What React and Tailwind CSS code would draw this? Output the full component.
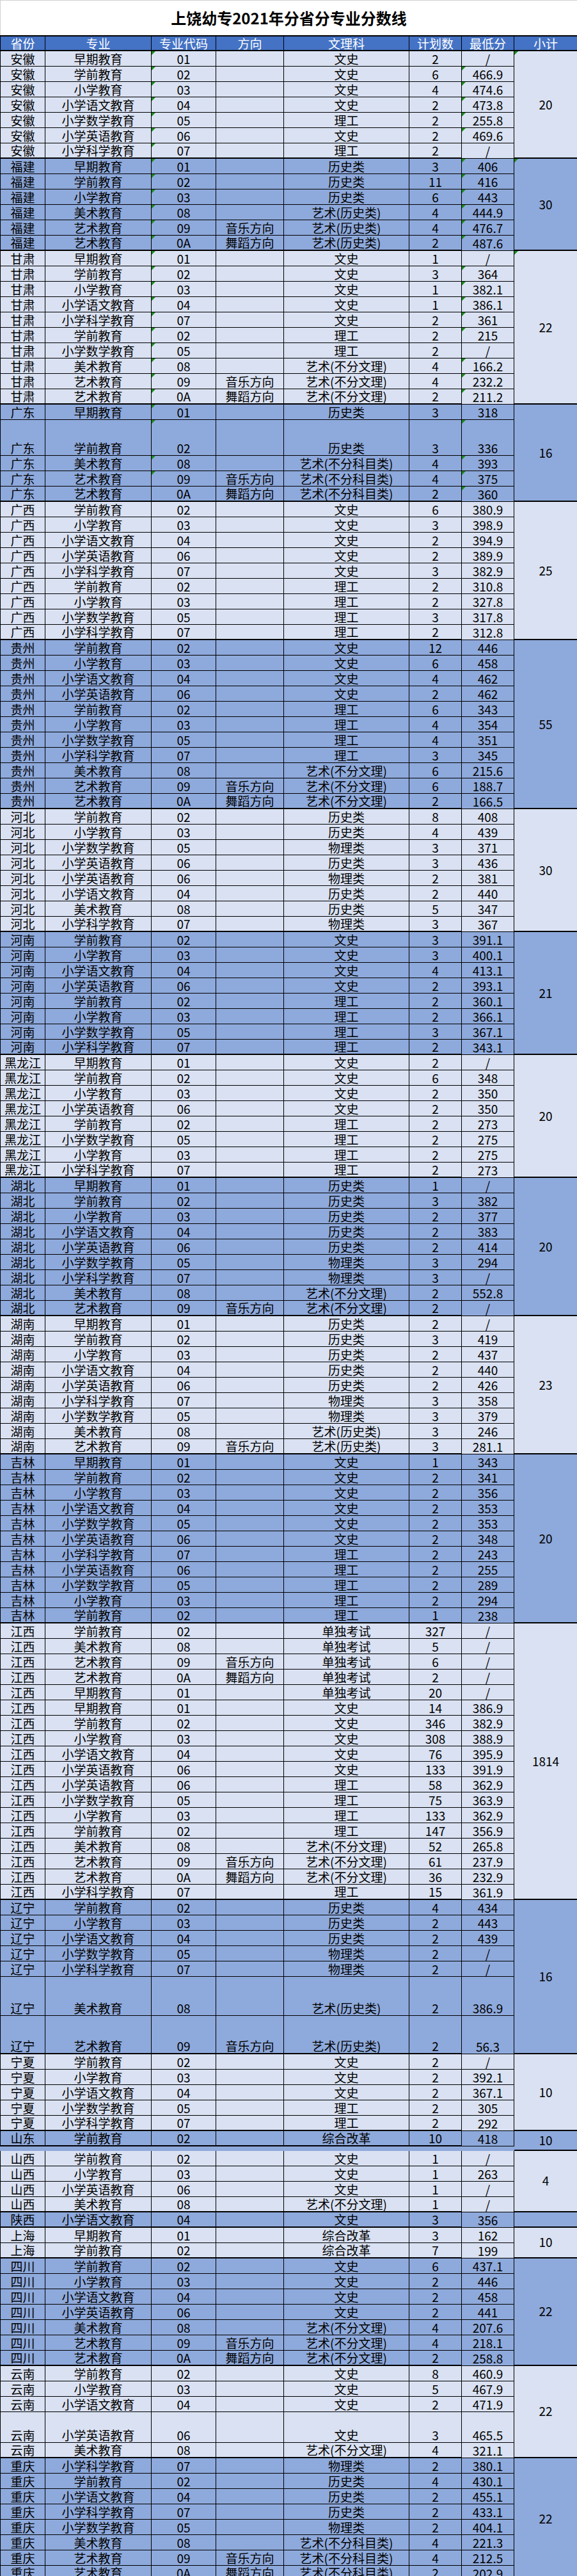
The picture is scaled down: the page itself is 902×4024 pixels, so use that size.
const groups = [
  { p: "安徽", total: "20", tri: true, rows: [
    ["早期教育", "01", "", "文史", "2", "/", "c"],
    ["学前教育", "02", "", "文史", "6", "466.9", "cs"],
    ["小学教育", "03", "", "文史", "4", "474.6", "cs"],
    ["小学语文教育", "04", "", "文史", "2", "473.8", "cs"],
    ["小学数学教育", "05", "", "理工", "2", "255.8", "cs"],
    ["小学英语教育", "06", "", "文史", "2", "469.6", "cs"],
    ["小学科学教育", "07", "", "理工", "2", "/", "c"],
  ]},
  { p: "福建", total: "30", tri: true, rows: [
    ["早期教育", "01", "", "历史类", "3", "406", "cs"],
    ["学前教育", "02", "", "历史类", "11", "416", "cs"],
    ["小学教育", "03", "", "历史类", "6", "443", "cs"],
    ["美术教育", "08", "", "艺术(历史类)", "4", "444.9", "cs"],
    ["艺术教育", "09", "音乐方向", "艺术(历史类)", "4", "476.7", "cs"],
    ["艺术教育", "0A", "舞蹈方向", "艺术(历史类)", "2", "487.6", "cs"],
  ]},
  { p: "甘肃", total: "22", tri: true, rows: [
    ["早期教育", "01", "", "文史", "1", "/", "c"],
    ["学前教育", "02", "", "文史", "3", "364", "cs"],
    ["小学教育", "03", "", "文史", "1", "382.1", "cs"],
    ["小学语文教育", "04", "", "文史", "1", "386.1", "cs"],
    ["小学科学教育", "07", "", "文史", "2", "361", "cs"],
    ["学前教育", "02", "", "理工", "2", "215", "cs"],
    ["小学数学教育", "05", "", "理工", "2", "/", "c"],
    ["美术教育", "08", "", "艺术(不分文理)", "4", "166.2", "cs"],
    ["艺术教育", "09", "音乐方向", "艺术(不分文理)", "4", "232.2", "cs"],
    ["艺术教育", "0A", "舞蹈方向", "艺术(不分文理)", "2", "211.2", "cs"],
  ]},
  { p: "广东", total: "16", rows: [
    ["早期教育", "01", "", "历史类", "3", "318", "c"],
    ["学前教育", "02", "", "历史类", "3", "336", "cs", 56],
    ["美术教育", "08", "", "艺术(不分科目类)", "4", "393", "cs"],
    ["艺术教育", "09", "音乐方向", "艺术(不分科目类)", "4", "375", "cs"],
    ["艺术教育", "0A", "舞蹈方向", "艺术(不分科目类)", "2", "360", "s"],
  ]},
  { p: "广西", total: "25", rows: [
    ["学前教育", "02", "", "文史", "6", "380.9"],
    ["小学教育", "03", "", "文史", "3", "398.9"],
    ["小学语文教育", "04", "", "文史", "2", "394.9"],
    ["小学英语教育", "06", "", "文史", "2", "389.9"],
    ["小学科学教育", "07", "", "文史", "3", "382.9"],
    ["学前教育", "02", "", "理工", "2", "310.8"],
    ["小学教育", "03", "", "理工", "2", "327.8"],
    ["小学数学教育", "05", "", "理工", "3", "317.8"],
    ["小学科学教育", "07", "", "理工", "2", "312.8"],
  ]},
  { p: "贵州", total: "55", rows: [
    ["学前教育", "02", "", "文史", "12", "446"],
    ["小学教育", "03", "", "文史", "6", "458"],
    ["小学语文教育", "04", "", "文史", "4", "462"],
    ["小学英语教育", "06", "", "文史", "2", "462"],
    ["学前教育", "02", "", "理工", "6", "343"],
    ["小学教育", "03", "", "理工", "4", "354"],
    ["小学数学教育", "05", "", "理工", "4", "351"],
    ["小学科学教育", "07", "", "理工", "3", "345"],
    ["美术教育", "08", "", "艺术(不分文理)", "6", "215.6"],
    ["艺术教育", "09", "音乐方向", "艺术(不分文理)", "6", "188.7"],
    ["艺术教育", "0A", "舞蹈方向", "艺术(不分文理)", "2", "166.5"],
  ]},
  { p: "河北", total: "30", rows: [
    ["学前教育", "02", "", "历史类", "8", "408"],
    ["小学教育", "03", "", "历史类", "4", "439"],
    ["小学数学教育", "05", "", "物理类", "3", "371"],
    ["小学英语教育", "06", "", "历史类", "3", "436"],
    ["小学英语教育", "06", "", "物理类", "2", "381"],
    ["小学语文教育", "04", "", "历史类", "2", "440"],
    ["美术教育", "08", "", "历史类", "5", "347"],
    ["小学科学教育", "07", "", "物理类", "3", "367"],
  ]},
  { p: "河南", total: "21", rows: [
    ["学前教育", "02", "", "文史", "3", "391.1"],
    ["小学教育", "03", "", "文史", "3", "400.1"],
    ["小学语文教育", "04", "", "文史", "4", "413.1"],
    ["小学英语教育", "06", "", "文史", "2", "393.1"],
    ["学前教育", "02", "", "理工", "2", "360.1"],
    ["小学教育", "03", "", "理工", "2", "366.1"],
    ["小学数学教育", "05", "", "理工", "3", "367.1"],
    ["小学科学教育", "07", "", "理工", "2", "343.1"],
  ]},
  { p: "黑龙江", total: "20", rows: [
    ["早期教育", "01", "", "文史", "2", "/"],
    ["学前教育", "02", "", "文史", "6", "348"],
    ["小学教育", "03", "", "文史", "2", "350"],
    ["小学英语教育", "06", "", "文史", "2", "350"],
    ["学前教育", "02", "", "理工", "2", "273"],
    ["小学数学教育", "05", "", "理工", "2", "275"],
    ["小学教育", "03", "", "理工", "2", "275"],
    ["小学科学教育", "07", "", "理工", "2", "273"],
  ]},
  { p: "湖北", total: "20", rows: [
    ["早期教育", "01", "", "历史类", "1", "/"],
    ["学前教育", "02", "", "历史类", "3", "382"],
    ["小学教育", "03", "", "历史类", "2", "377"],
    ["小学语文教育", "04", "", "历史类", "2", "383"],
    ["小学英语教育", "06", "", "历史类", "2", "414"],
    ["小学数学教育", "05", "", "物理类", "3", "294"],
    ["小学科学教育", "07", "", "物理类", "3", "/"],
    ["美术教育", "08", "", "艺术(不分文理)", "2", "552.8"],
    ["艺术教育", "09", "音乐方向", "艺术(不分文理)", "2", "/"],
  ]},
  { p: "湖南", total: "23", rows: [
    ["早期教育", "01", "", "历史类", "2", "/"],
    ["学前教育", "02", "", "历史类", "3", "419"],
    ["小学教育", "03", "", "历史类", "2", "437"],
    ["小学语文教育", "04", "", "历史类", "2", "440"],
    ["小学英语教育", "06", "", "历史类", "2", "426"],
    ["小学科学教育", "07", "", "物理类", "3", "358"],
    ["小学数学教育", "05", "", "物理类", "3", "379"],
    ["美术教育", "08", "", "艺术(历史类)", "3", "246"],
    ["艺术教育", "09", "音乐方向", "艺术(历史类)", "3", "281.1"],
  ]},
  { p: "吉林", total: "20", rows: [
    ["早期教育", "01", "", "文史", "1", "343"],
    ["学前教育", "02", "", "文史", "2", "341"],
    ["小学教育", "03", "", "文史", "2", "356"],
    ["小学语文教育", "04", "", "文史", "2", "353"],
    ["小学数学教育", "05", "", "文史", "2", "353"],
    ["小学英语教育", "06", "", "文史", "2", "348"],
    ["小学科学教育", "07", "", "理工", "2", "243"],
    ["小学英语教育", "06", "", "理工", "2", "255"],
    ["小学数学教育", "05", "", "理工", "2", "289"],
    ["小学教育", "03", "", "理工", "2", "294"],
    ["学前教育", "02", "", "理工", "1", "238"],
  ]},
  { p: "江西", total: "1814", rows: [
    ["学前教育", "02", "", "单独考试", "327", "/"],
    ["美术教育", "08", "", "单独考试", "5", "/"],
    ["艺术教育", "09", "音乐方向", "单独考试", "6", "/"],
    ["艺术教育", "0A", "舞蹈方向", "单独考试", "2", "/"],
    ["早期教育", "01", "", "单独考试", "20", "/"],
    ["早期教育", "01", "", "文史", "14", "386.9"],
    ["学前教育", "02", "", "文史", "346", "382.9"],
    ["小学教育", "03", "", "文史", "308", "388.9"],
    ["小学语文教育", "04", "", "文史", "76", "395.9"],
    ["小学英语教育", "06", "", "文史", "133", "391.9"],
    ["小学英语教育", "06", "", "理工", "58", "362.9"],
    ["小学数学教育", "05", "", "理工", "75", "363.9"],
    ["小学教育", "03", "", "理工", "133", "362.9"],
    ["学前教育", "02", "", "理工", "147", "356.9"],
    ["美术教育", "08", "", "艺术(不分文理)", "52", "265.8"],
    ["艺术教育", "09", "音乐方向", "艺术(不分文理)", "61", "237.9"],
    ["艺术教育", "0A", "舞蹈方向", "艺术(不分文理)", "36", "232.9"],
    ["小学科学教育", "07", "", "理工", "15", "361.9"],
  ]},
  { p: "辽宁", total: "16", rows: [
    ["学前教育", "02", "", "历史类", "4", "434"],
    ["小学教育", "03", "", "历史类", "2", "443"],
    ["小学语文教育", "04", "", "历史类", "2", "439"],
    ["小学数学教育", "05", "", "物理类", "2", "/"],
    ["小学科学教育", "07", "", "物理类", "2", "/"],
    ["美术教育", "08", "", "艺术(历史类)", "2", "386.9", "", 61],
    ["艺术教育", "09", "音乐方向", "艺术(历史类)", "2", "56.3", "", 60],
  ]},
  { p: "宁夏", total: "10", rows: [
    ["学前教育", "02", "", "文史", "2", "/"],
    ["小学教育", "03", "", "文史", "2", "392.1"],
    ["小学语文教育", "04", "", "文史", "2", "367.1"],
    ["小学数学教育", "05", "", "理工", "2", "305"],
    ["小学科学教育", "07", "", "理工", "2", "292"],
  ]},
  { p: "山东", total: "10", rows: [
    ["学前教育", "02", "", "综合改革", "10", "418"],
  ]},
  { p: "山西", total: "4", rows: [
    ["学前教育", "02", "", "文史", "1", "/"],
    ["小学教育", "03", "", "文史", "1", "263"],
    ["小学英语教育", "06", "", "文史", "1", "/"],
    ["美术教育", "08", "", "艺术(不分文理)", "1", "/"],
  ]},
  { p: "陕西", total: "", rows: [
    ["小学语文教育", "04", "", "文史", "3", "356"],
  ]},
  { p: "上海", total: "10", rows: [
    ["早期教育", "01", "", "综合改革", "3", "162"],
    ["学前教育", "02", "", "综合改革", "7", "199"],
  ]},
  { p: "四川", total: "22", rows: [
    ["学前教育", "02", "", "文史", "6", "437.1"],
    ["小学教育", "03", "", "文史", "2", "446"],
    ["小学语文教育", "04", "", "文史", "2", "458"],
    ["小学英语教育", "06", "", "文史", "2", "441"],
    ["美术教育", "08", "", "艺术(不分文理)", "4", "207.6"],
    ["艺术教育", "09", "音乐方向", "艺术(不分文理)", "4", "218.1"],
    ["艺术教育", "0A", "舞蹈方向", "艺术(不分文理)", "2", "258.8"],
  ]},
  { p: "云南", total: "22", rows: [
    ["学前教育", "02", "", "文史", "8", "460.9"],
    ["小学教育", "03", "", "文史", "5", "467.9"],
    ["小学语文教育", "04", "", "文史", "2", "471.9"],
    ["小学英语教育", "06", "", "文史", "3", "465.5", "", 48],
    ["美术教育", "08", "", "艺术(不分文理)", "4", "321.1"],
  ]},
  { p: "重庆", total: "22", rows: [
    ["小学科学教育", "07", "", "物理类", "2", "380.1"],
    ["学前教育", "02", "", "历史类", "4", "430.1"],
    ["小学语文教育", "04", "", "历史类", "2", "455.1"],
    ["小学科学教育", "07", "", "历史类", "2", "433.1"],
    ["小学数学教育", "05", "", "物理类", "2", "404.1"],
    ["美术教育", "08", "", "艺术(不分科目类)", "4", "221.3"],
    ["艺术教育", "09", "音乐方向", "艺术(不分科目类)", "4", "212.5"],
    ["艺术教育", "0A", "舞蹈方向", "艺术(不分科目类)", "2", "202.9"],
  ]},
];

const COLS = ["w-[71px] border-l", "w-[166px]", "w-[101px]", "w-[106px]", "w-[196px]", "w-[82px]", "w-[82px]"];
const HEADS = ["省份", "专业", "专业代码", "方向", "文理科", "计划数", "最低分"];
const HEIGHTS = { 24: "h-[24px]", 48: "h-[48px]", 56: "h-[56px]", 60: "h-[60px]", 61: "h-[61px]" };

const Tri = () => (
  <span className="absolute left-0 top-0 h-0 w-0 border-t-[6px] border-r-[6px] border-t-[#1a8a1a] border-r-transparent" />
);

const Row = ({ prov, row, last }) => {
  const [major, code, dir, subj, plan, score, flags = "", h = 24] = row;
  const vals = [prov, major, code, dir, subj, plan, score];
  return (
    <div className={`flex ${HEIGHTS[h]}`}>
      {vals.map((v, i) => (
        <div
          key={i}
          className={`relative flex shrink-0 items-end justify-center border-r border-black leading-[23px] whitespace-nowrap ${COLS[i]} ${
            last && i !== 6 ? "border-b-2" : "border-b"
          }`}
        >
          {i === 2 && flags.includes("c") && <Tri />}
          {i === 6 && flags.includes("s") && <Tri />}
          {v}
        </div>
      ))}
    </div>
  );
};

export default function App() {
  return (
    <div className="w-[902px] bg-white text-black font-['Noto_Sans_CJK_SC','Liberation_Sans',sans-serif] text-[19px]">
      {/* TITLE */}
      <div className="flex h-[55px] items-center justify-center border-t border-l border-[#d0d0d0] text-[24px] font-bold">
        上饶幼专2021年分省分专业分数线
      </div>

      {/* HEADER */}
      <div className="flex h-[25px] border-y-2 border-black bg-[#4472C4] text-white">
        {HEADS.map((t, i) => (
          <div key={t} className={`flex shrink-0 items-end justify-center border-r border-black leading-[21px] ${COLS[i]}`}>
            {t}
          </div>
        ))}
        <div className="flex flex-1 items-end justify-center leading-[21px]">小计</div>
      </div>

      {/* BODY */}
      {groups.map((g, gi) => (
        <div key={g.p} className={`flex ${gi % 2 === 0 ? "bg-[#D9E1F2]" : "bg-[#8EA9DB]"}`}>
          <div className="flex w-[804px] shrink-0 flex-col">
            {g.rows.map((r, ri) => (
              <Row key={ri} prov={g.p} row={r} last={ri === g.rows.length - 1} />
            ))}
          </div>
          <div className="relative flex flex-1 items-center justify-center border-b-2 border-black">
            {g.tri && <Tri />}
            {g.total}
          </div>
        </div>
      ))}
    </div>
  );
}
